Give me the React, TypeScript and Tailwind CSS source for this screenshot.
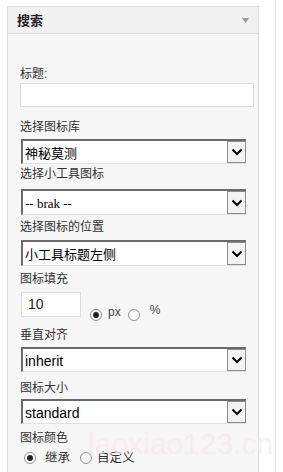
import React from "react";

const Chevron = () => (
  <svg width="12" height="8" viewBox="0 0 12 8">
    <polyline points="1.5,1.5 6,6 10.5,1.5" fill="none" stroke="#000" strokeWidth="2" />
  </svg>
);

function FakeSelect({ text, h, size, mt, textClass }: { text: string; h: string; size: string; mt: string; textClass?: string }) {
  return (
    <div className={`${mt} ml-[1px] w-[225px] ${h} flex bg-white border-t-2 border-l-2 border-[#6a6a6a] border-b border-b-[#e0e0e0]`}>
      <div className={`flex-1 pl-[2px] flex ${textClass ?? "items-center"} text-black ${size}`}>{text}</div>
      <div className="w-[19px] h-full border border-[#8c8c8c] bg-[#f3f3f3] flex items-center justify-center">
        <Chevron />
      </div>
    </div>
  );
}

const Radio = ({ checked }: { checked?: boolean }) => (
  <span className="w-[12px] h-[12px] rounded-full border border-[#8f8f8f] bg-white flex items-center justify-center shrink-0">
    {checked && <span className="w-[6px] h-[6px] rounded-full bg-[#222]" />}
  </span>
);

export default function App() {
  const label = "h-[18px] leading-[18px] text-[12px] text-[#333]";
  return (
    <div className="relative w-[283px] h-[472px] overflow-hidden bg-white flex font-['Liberation_Sans','Noto_Sans_CJK_SC',sans-serif]">
      <div className="ml-[7px] mt-[6px] w-[252px] border border-[#dfdfdf] flex flex-col self-start h-[500px]">
        <div className="h-[27px] bg-[#f1f1f1] border-b border-[#dcdcdc] flex items-center justify-between pl-[9px] pr-[9px] shrink-0">
          <span className="text-[13px] font-bold text-[#222] font-['Noto_Sans_CJK_SC',sans-serif]">搜索</span>
          <svg width="7" height="5" viewBox="0 0 7 5">
            <polygon points="0,0 7,0 3.5,5" fill="#9a9a9a" />
          </svg>
        </div>
        <div className="flex-1 bg-[#f6f6f6] pl-[12px] flex flex-col items-start">
          <div className={`${label} mt-[31px]`}>标题:</div>
          <div className="mt-0 w-[234px] h-[24px] bg-white border border-[#dcdcdc]" />

          <div className={`${label} mt-[11px]`}>选择图标库</div>
          <FakeSelect text="神秘莫测" h="h-[25px]" size="text-[13px]" mt="mt-[3px]" textClass="items-center pt-[3px]" />

          <div className={`${label} mt-[1px]`}>选择小工具图标</div>
          <FakeSelect
            text="-- brak --"
            h="h-[26px]"
            size="font-['Liberation_Serif',serif] text-[13px]"
            mt="mt-[6px]"
            textClass="items-end pb-[1px]"
          />

          <div className={`${label} mt-[3px]`}>选择图标的位置</div>
          <FakeSelect text="小工具标题左侧" h="h-[26px]" size="text-[13px]" mt="mt-[4px]" textClass="items-center pt-[2px]" />

          <div className={`${label} mt-[4px]`}>图标填充</div>
          <div className="mt-[4px] h-[25px] flex items-start ml-[1px]">
            <div className="w-[60px] h-[25px] bg-white border border-[#dcdcdc] flex items-center pl-[6px] text-[14px] text-[#222]">
              10
            </div>
            <div className="ml-[9px] mt-[17px] flex items-center text-[12px] text-[#444]">
              <Radio checked />
              <span className="ml-[6px] -mt-[6px]">px</span>
              <span className="ml-[7px]"><Radio /></span>
              <span className="ml-[10px] -mt-[10px]">%</span>
            </div>
          </div>

          <div className={`${label} mt-[9px]`}>垂直对齐</div>
          <FakeSelect text="inherit" h="h-[25px]" size="text-[14px]" mt="mt-[3px]" textClass="items-center pt-[3px]" />

          <div className={`${label} mt-[7px]`}>图标大小</div>
          <FakeSelect text="standard" h="h-[25px]" size="text-[14px]" mt="mt-[2px]" textClass="items-center pt-[3px]" />

          <div className={`${label} mt-[5px]`}>图标颜色</div>
          <div className="mt-[2px] ml-[4px] flex items-center text-[12.5px] text-[#333]">
            <Radio checked />
            <span className="ml-[9px]">继承</span>
            <span className="ml-[10px]"><Radio /></span>
            <span className="ml-[5px]">自定义</span>
          </div>
        </div>
      </div>
      <div className="ml-[16px] w-px h-full bg-[#e3e3e3]" />
      <div className="absolute left-[88px] top-[424px] text-[30px] leading-[40px] text-[#f6ecec] opacity-70 pointer-events-none">
        laoxiao123.cn
      </div>
    </div>
  );
}
